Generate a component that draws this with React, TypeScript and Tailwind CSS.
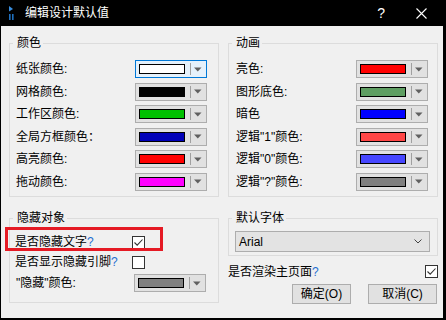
import React from "react";

const FONT = "font-['Liberation_Sans','Noto_Sans_CJK_SC',sans-serif]";

function Combo({ swatch, focused }: { swatch: string; focused?: boolean }) {
  return (
    <div
      className={`flex h-[18px] w-[72px] shrink-0 items-center border pl-[3px] ${
        focused ? "border-[#0078d7] bg-[#e5f1fb]" : "border-[#adadad] bg-[#e1e1e1]"
      }`}
    >
      <div className={`h-[10px] w-[46px] border border-black ${swatch}`} />
      <div className="ml-[5px] h-[12px] w-px bg-[#a0a0a0]" />
      <svg width="8" height="5" className="ml-[3px]" viewBox="0 0 8 5">
        <path d="M0 0.5H7.5L3.75 4.5Z" fill="#606060" />
      </svg>
    </div>
  );
}

function Check({ checked }: { checked?: boolean }) {
  return (
    <div className="flex h-[13px] w-[13px] shrink-0 items-center justify-center border border-[#333333] bg-white">
      {checked && (
        <svg width="11" height="11" viewBox="0 0 11 11">
          <path d="M1.5 5.5L4.2 8.2L9.5 2.5" stroke="#333333" strokeWidth="1.1" fill="none" />
        </svg>
      )}
    </div>
  );
}

function Q() {
  return <span className="text-[#1f6fd1]">?</span>;
}

function Row({ label, swatch, focused }: { label: React.ReactNode; swatch: string; focused?: boolean }) {
  return (
    <div className="flex h-[18px] items-center justify-between">
      <span className="text-[12px] leading-[16px]">{label}</span>
      <Combo swatch={swatch} focused={focused} />
    </div>
  );
}

function Legend({ children }: { children: React.ReactNode }) {
  return <legend className="ml-[3px] pl-[4px] pr-[2px] text-[12px] leading-[16px]">{children}</legend>;
}

export default function App() {
  return (
    <div className={`flex h-[320px] w-[446px] flex-col bg-black text-black ${FONT}`}>
      {/* Title bar */}
      <div className="flex h-[26px] shrink-0 items-center text-white">
        <svg width="8" height="15" viewBox="0 0 8 15" className="ml-[8px]">
          <path d="M1 0L5 3L1 5.5Z" fill="#3a8fe0" />
          <rect x="1" y="8" width="1.6" height="6" fill="#1f6fbd" />
          <rect x="4" y="8" width="1.6" height="6" fill="#1f6fbd" />
        </svg>
        <span className="ml-[9px] text-[12px] leading-[16px]">编辑设计默认值</span>
        <span className="ml-auto mr-[31px] text-[14px] leading-[16px] font-['Liberation_Sans',sans-serif]">?</span>
        <svg width="11" height="11" viewBox="0 0 11 11" className="mr-[19px]">
          <path d="M0.5 0.5L10.5 10.5M10.5 0.5L0.5 10.5" stroke="white" strokeWidth="1.1" />
        </svg>
      </div>

      {/* Body */}
      <div className="relative ml-[1px] mr-[3px] mb-[2px] flex-1 bg-[#f0f0f0] pl-[8px] pr-[5px] pt-[9px]">
        <div className="grid grid-cols-[210px_210px] gap-x-[9px]">
          <fieldset className="h-[162px] border border-[#dcdcdc]">
            <Legend>颜色</Legend>
            <div className="flex flex-col gap-y-[4.6px] pl-[6px] pr-[11px] pt-[9px]">
              <Row label="纸张颜色:" swatch="bg-white" focused />
              <Row label="网格颜色:" swatch="bg-black" />
              <Row label="工作区颜色:" swatch="bg-[#00c000]" />
              <Row label="全局方框颜色：" swatch="bg-[#0000b8]" />
              <Row label="高亮颜色:" swatch="bg-[#ff0000]" />
              <Row label="拖动颜色:" swatch="bg-[#ff00ff]" />
            </div>
          </fieldset>
          <fieldset className="h-[162px] border border-[#dcdcdc]">
            <Legend>动画</Legend>
            <div className="flex flex-col gap-y-[4.6px] pl-[7px] pr-[9px] pt-[9px]">
              <Row label="亮色:" swatch="bg-[#ff0000]" />
              <Row label="图形底色:" swatch="bg-[#5e9e62]" />
              <Row label="暗色" swatch="bg-[#0000ff]" />
              <Row label={'逻辑"1"颜色:'} swatch="bg-[#ff4646]" />
              <Row label={'逻辑"0"颜色:'} swatch="bg-[#4646ff]" />
              <Row label={'逻辑"?"颜色:'} swatch="bg-[#808080]" />
            </div>
          </fieldset>

          {/* Bottom left */}
          <fieldset className="mt-[13px] h-[93px] border border-[#dcdcdc]">
            <Legend>隐藏对象</Legend>
            <div className="flex flex-col pl-[5px] pt-[6px]">
              <div className="flex h-[20px] items-center">
                <span className="w-[117px] text-[12px] leading-[16px]">
                  是否隐藏文字<Q />
                </span>
                <Check checked />
              </div>
              <div className="flex h-[20px] items-center">
                <span className="w-[117px] text-[12px] leading-[16px]">
                  是否显示隐藏引脚<Q />
                </span>
                <Check />
              </div>
              <div className="mt-[2px] flex h-[18px] items-center">
                <span className="w-[119px] pl-[1px] text-[12px] leading-[16px]">"隐藏"颜色:</span>
                <Combo swatch="bg-[#808080]" />
              </div>
            </div>
          </fieldset>

          {/* Bottom right */}
          <div className="mt-[13px] flex flex-col">
            <fieldset className="h-[46px] border border-[#dcdcdc]">
              <Legend>默认字体</Legend>
              <div className="pl-[6px] pr-[7px] pt-[5px]">
                <div className="flex h-[21px] items-center border border-[#adadad] bg-[#e3e3e3] pl-[3px] pr-[7px]">
                  <span className="text-[12px] leading-[16px] font-['Liberation_Sans',sans-serif]">Arial</span>
                  <svg width="8" height="5" viewBox="0 0 8 5" className="ml-auto">
                    <path d="M0.5 0.5L4 4L7.5 0.5" stroke="#444444" strokeWidth="1" fill="none" />
                  </svg>
                </div>
              </div>
            </fieldset>
            <div className="mt-[9px] flex h-[13px] items-center justify-between">
              <span className="text-[12px] leading-[16px]">
                是否渲染主页面<Q />
              </span>
              <Check checked />
            </div>
            <div className="mt-[6px] flex justify-end gap-x-[17px] pr-[1px]">
              <button className="flex h-[20px] w-[59px] items-center justify-center border border-[#adadad] bg-[#e1e1e1] text-[12px] leading-[16px]">
                确定(O)
              </button>
              <button className="flex h-[20px] w-[69px] items-center justify-center border border-[#adadad] bg-[#e1e1e1] text-[12px] leading-[16px]">
                取消(C)
              </button>
            </div>
          </div>
        </div>

        {/* Red annotation box */}
        <div className="pointer-events-none absolute left-[4px] top-[201px] h-[24px] w-[158px] border-[3px] border-[#e51a24]" />
      </div>
    </div>
  );
}
